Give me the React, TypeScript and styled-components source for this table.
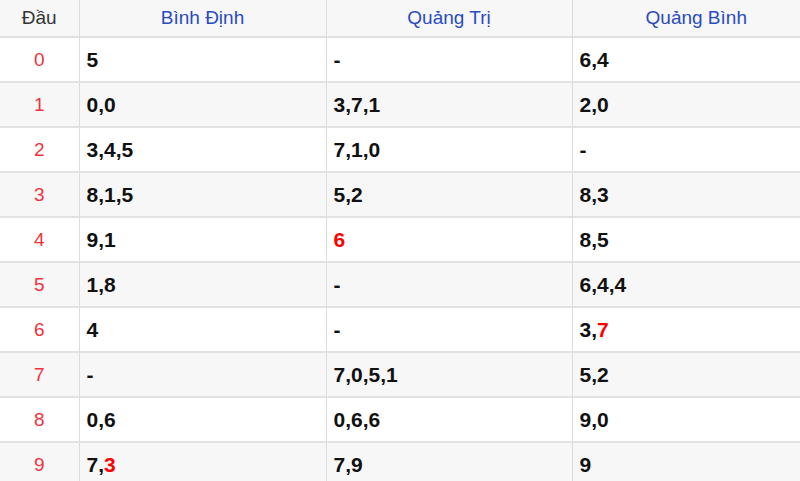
import React from "react";
import styled, { createGlobalStyle } from "styled-components";

const Global = createGlobalStyle`
  html, body { margin: 0; padding: 0; background: #fff; overflow: hidden; }
  body { font-family: Arial, "Liberation Sans", sans-serif; }
`;

const Table = styled.table`
  width: 820px;
  border-collapse: collapse;
  table-layout: fixed;
  font-family: Arial, "Liberation Sans", sans-serif;
`;

const HeadRow = styled.tr`
  background: #f7f7f7;
  height: 37px;
`;

const HeadCell = styled.th<{ $blue?: boolean }>`
  font-weight: 400;
  font-size: 19px;
  color: ${(p) => (p.$blue ? "#2a4bc1" : "#333")};
  text-align: center;
  border-right: 1px solid #dcdcdc;
  border-bottom: 2px solid #e0e0e0;
  padding: 0;
  &:last-child { border-right: none; }
`;

const Row = styled.tr<{ $odd: boolean }>`
  background: ${(p) => (p.$odd ? "#f7f7f7" : "#fff")};
  height: 45px;
`;

const HeadNum = styled.td`
  font-size: 19px;
  color: #f2313a;
  text-align: center;
  border-right: 1px solid #dcdcdc;
  border-bottom: 2px solid #e2e2e2;
  padding: 0;
`;

const Cell = styled.td`
  font-size: 21px;
  font-weight: 700;
  color: #111;
  text-align: left;
  padding: 0 0 0 7px;
  border-right: 1px solid #dcdcdc;
  border-bottom: 2px solid #e2e2e2;
  &:last-child { border-right: none; }
`;

const Hot = styled.span`
  color: #f00;
`;

type Part = string | { hot: string };

const rows: Part[][][] = [
  [["5"], ["-"], ["6,4"]],
  [["0,0"], ["3,7,1"], ["2,0"]],
  [["3,4,5"], ["7,1,0"], ["-"]],
  [["8,1,5"], ["5,2"], ["8,3"]],
  [["9,1"], [{ hot: "6" }], ["8,5"]],
  [["1,8"], ["-"], ["6,4,4"]],
  [["4"], ["-"], ["3,", { hot: "7" }]],
  [["-"], ["7,0,5,1"], ["5,2"]],
  [["0,6"], ["0,6,6"], ["9,0"]],
  [["7,", { hot: "3" }], ["7,9"], ["9"]],
];

export default function App() {
  return (
    <>
      <Global />
      <Table>
        <colgroup>
          <col style={{ width: 79 }} />
          <col style={{ width: 247 }} />
          <col style={{ width: 246 }} />
          <col style={{ width: 248 }} />
        </colgroup>
        <thead>
          <HeadRow>
            <HeadCell>Đầu</HeadCell>
            <HeadCell $blue>Bình Định</HeadCell>
            <HeadCell $blue>Quảng Trị</HeadCell>
            <HeadCell $blue>Quảng Bình</HeadCell>
          </HeadRow>
        </thead>
        <tbody>
          {rows.map((r, i) => (
            <Row key={i} $odd={i % 2 === 1}>
              <HeadNum>{i}</HeadNum>
              {r.map((parts, j) => (
                <Cell key={j}>
                  {parts.map((p, k) =>
                    typeof p === "string" ? (
                      <React.Fragment key={k}>{p}</React.Fragment>
                    ) : (
                      <Hot key={k}>{p.hot}</Hot>
                    )
                  )}
                </Cell>
              ))}
            </Row>
          ))}
        </tbody>
      </Table>
    </>
  );
}
